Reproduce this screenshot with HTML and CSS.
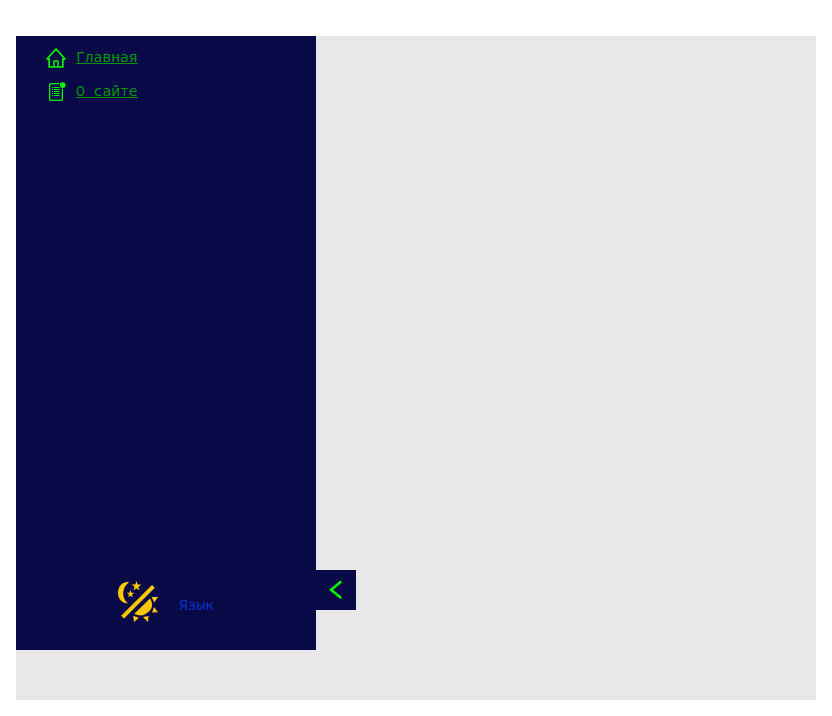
FILE: index.html
```html
<!DOCTYPE html>
<html lang="ru">
<head>
<meta charset="utf-8">
<title>Меню</title>
<link rel="stylesheet" href="styles.css">
</head>
<body>
<main class="page">
  <aside class="sidebar">
    <nav class="menu">
      <a class="menu-item" href="#">
        <svg class="icon" viewBox="0 0 20 20"><path d="M1 11 10 1 19 11H16.8V19H3.2V11Z" fill="none" stroke="#0f0" stroke-width="1.7" stroke-linejoin="round"/><path d="M8 19V13H12V19" fill="none" stroke="#0f0" stroke-width="1.4"/></svg>
        <span class="label">Главная</span>
      </a>
      <a class="menu-item" href="#">
        <svg class="icon" viewBox="0 0 20 20"><path d="M13 1.6H5Q3.6 1.6 3.6 3V17Q3.6 18.4 5 18.4H15Q16.4 18.4 16.4 17V7" fill="none" stroke="#0f0" stroke-width="1.3"/><circle cx="16.7" cy="3.1" r="2.9" fill="#0f0"/><path d="M8 5.5H13.5M8 7.5H13.5M8 9.5H13.5M8 11.5H13.5M8 13.5H13.5M5.9 5.5H7M5.9 7.5H7M5.9 9.5H7M5.9 11.5H7M5.9 13.5H7" stroke="#0f0" stroke-width="1"/></svg>
        <span class="label">О сайте</span>
      </a>
    </nav>
    <footer class="controls">
      <svg class="theme" viewBox="0 0 40 40" fill="#ffc800"><path d="M11 1.2C3.8.2 0 6.2 0 12 0 18.2 4.4 22.6 10 22.2 3.4 17.8 3.6 6.4 11 1.2Z"/><path d="m18.5 0 1.2 3.5 3.7.1-3 2.2 1.1 3.6-3-2.1-3 2.1 1.1-3.6-3-2.2 3.7-.1Z"/><path d="m12.5 9 .9 2.7 2.9.1-2.3 1.7.8 2.8-2.3-1.6-2.4 1.6.9-2.8-2.4-1.7 2.9-.1Z"/><path d="M34 4 36.8 6.8 6 37.6 3.2 34.8Z"/><path d="M32 17.5Q37 25 30.5 31Q24 36.8 16.3 32.8Z"/><path d="M33.5 16H40L36.3 21.4ZM36 26 40 31.2 34 31.5ZM25 36 30.6 35 30 41ZM15.2 34.7 20.8 36.7 16 41Z"/></svg>
      <span class="language">Язык</span>
    </footer>
    <button class="toggle" aria-label="Свернуть"><svg viewBox="0 0 40 40"><path d="M25.2 11.5 15 19.8 25.2 28" fill="none" stroke="#0f0" stroke-width="2.5"/></svg></button>
  </aside>
</main>
</body>
</html>
```
FILE: styles.css
```css
* { box-sizing: border-box; }
body { margin: 0; padding: 36px 16px 16px; background: #fff; font: 16px "Noto Sans Mono", "DejaVu Sans Mono", monospace; font-stretch: 87.5%; font-size: 11pt; }
.page { height: 664px; background: #e8e8ea; }
.sidebar { position: relative; width: 300px; height: 614px; background: #090947; display: flex; flex-direction: column; justify-content: space-between; }
.menu { display: flex; flex-direction: column; gap: 14px; padding: 12px 30px; }
.menu-item { display: flex; align-items: center; gap: 10px; height: 20px; color: #009600; line-height: 20px; }
.label { position: relative; top: -2px; text-decoration: underline; white-space: pre; }
.icon { width: 20px; height: 20px; }
.controls { display: flex; align-items: center; gap: 20px; height: 69px; padding: 0 0 29px 102px; color: #0032c8; }
.theme { width: 40px; height: 40px; overflow: visible; }
.language { position: relative; top: 3px; left: 1px; }
.toggle { position: absolute; left: 300px; top: 534px; width: 40px; height: 40px; padding: 0; border: 0; background: #090947; }
.toggle svg { display: block; width: 40px; height: 40px; }
```
